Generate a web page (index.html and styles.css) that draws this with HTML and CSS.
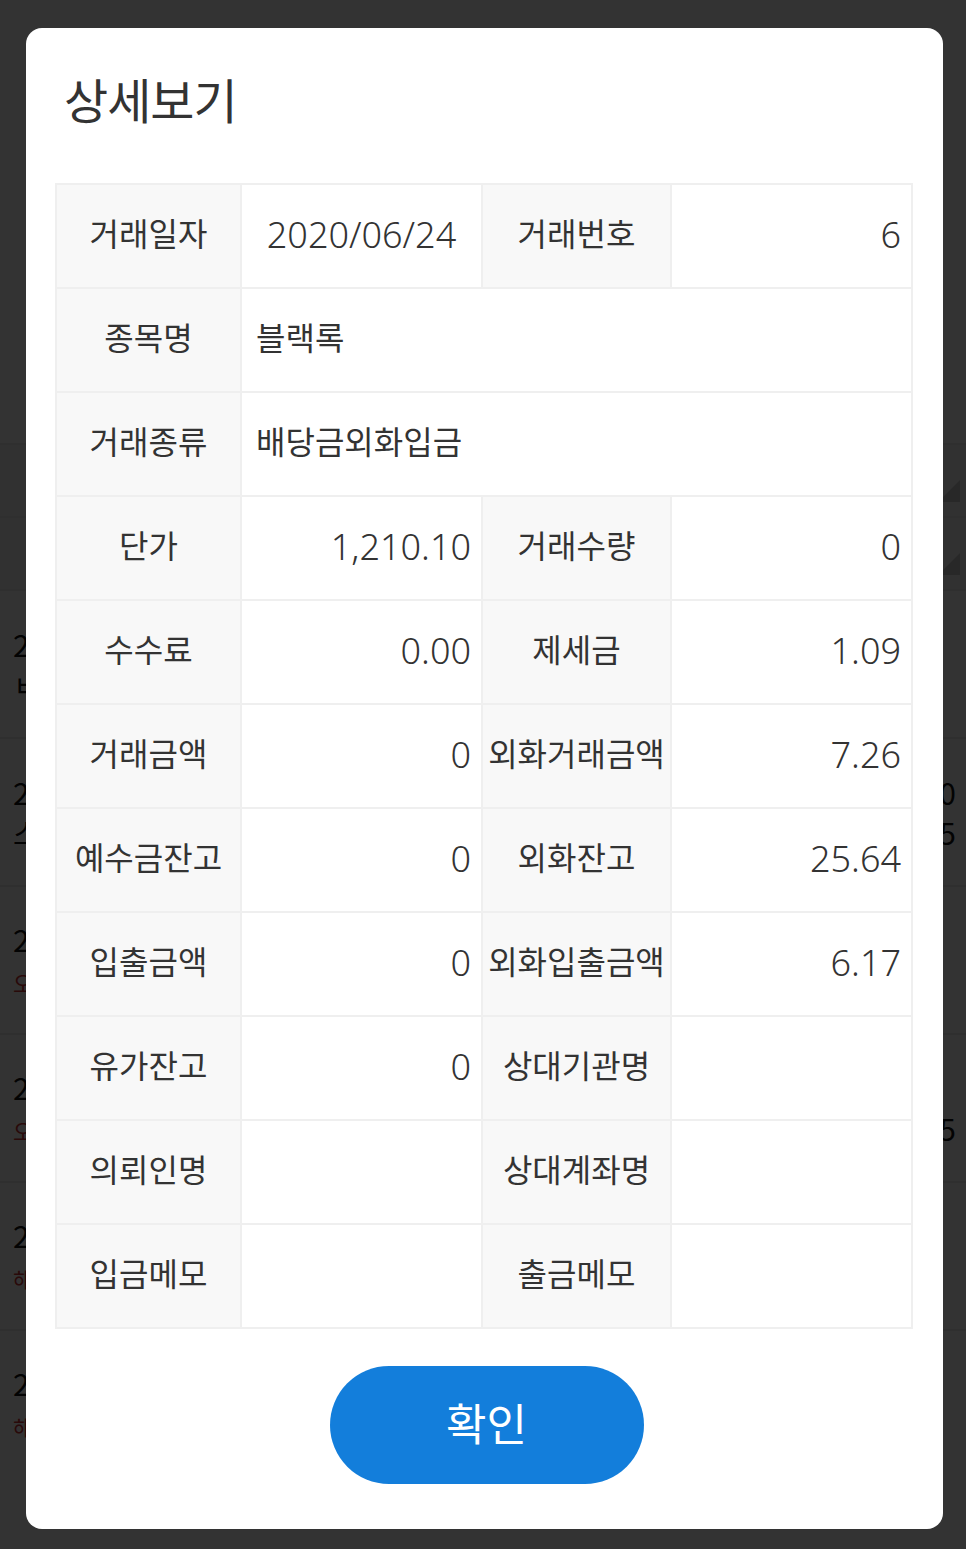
FILE: index.html
```html
<!DOCTYPE html>
<html lang="ko">

<head>
    <meta charset="UTF-8">
    <title>상세보기</title>

    <link rel="stylesheet" href="styles.css">
</head>

<body>
    <div class="behind">
        <div class="behind-sort"><span class="tri"></span></div>
        <div class="behind-sort"><span class="tri"></span></div>
        <div class="behind-row"><span class="l">2<br>ㅂ</span></div>
        <div class="behind-row"><span class="l">2<br>스</span><span class="r">0<br>5</span></div>
        <div class="behind-row"><span class="l">2<br><em>오</em></span></div>
        <div class="behind-row"><span class="l">2<br><em>오</em></span><span class="r">&nbsp;<br>5</span></div>
        <div class="behind-row"><span class="l">2<br><em>해</em></span></div>
        <div class="behind-row"><span class="l">2<br><em>해</em></span></div>
    </div>

    <div class="dim"></div>

    <div class="modal">
        <h2 class="modal-title">상세보기</h2>

        <table class="detail">
            <colgroup>
                <col class="c-label">
                <col class="c-value">
                <col class="c-label2">
                <col class="c-value2">
            </colgroup>
            <tr>
                <th>거래일자</th>
                <td class="center">2020/06/24</td>
                <th>거래번호</th>
                <td class="num">6</td>
            </tr>
            <tr>
                <th>종목명</th>
                <td class="text" colspan="3">블랙록</td>
            </tr>
            <tr>
                <th>거래종류</th>
                <td class="text" colspan="3">배당금외화입금</td>
            </tr>
            <tr>
                <th>단가</th>
                <td class="num">1,210.10</td>
                <th>거래수량</th>
                <td class="num">0</td>
            </tr>
            <tr>
                <th>수수료</th>
                <td class="num">0.00</td>
                <th>제세금</th>
                <td class="num">1.09</td>
            </tr>
            <tr>
                <th>거래금액</th>
                <td class="num">0</td>
                <th>외화거래금액</th>
                <td class="num">7.26</td>
            </tr>
            <tr>
                <th>예수금잔고</th>
                <td class="num">0</td>
                <th>외화잔고</th>
                <td class="num">25.64</td>
            </tr>
            <tr>
                <th>입출금액</th>
                <td class="num">0</td>
                <th>외화입출금액</th>
                <td class="num">6.17</td>
            </tr>
            <tr>
                <th>유가잔고</th>
                <td class="num">0</td>
                <th>상대기관명</th>
                <td class="num"></td>
            </tr>
            <tr>
                <th>의뢰인명</th>
                <td class="num"></td>
                <th>상대계좌명</th>
                <td class="num"></td>
            </tr>
            <tr>
                <th>입금메모</th>
                <td class="num"></td>
                <th>출금메모</th>
                <td class="num"></td>
            </tr>
        </table>

        <div class="actions">
            <button class="btn-ok" type="button">확인</button>
        </div>
    </div>
</body>

</html>
```

FILE: styles.css
```css
* {
    font-family: "Noto Sans CJK KR", "Noto Sans", sans-serif;
    box-sizing: border-box;
}

html,
body {
    height: 100%;
    padding: 0;
    margin: 0;
}

body {
    background-color: #fff;
    color: #333;
    overflow: hidden;
}

/* page under the dialog */
.behind {
    display: flex;
    flex-direction: column;
    padding-top: 443px;
}

.behind-sort {
    height: 73px;
    border-top: 2px solid #e8e8e8;
    background-color: #f4f4f4;
    position: relative;
}

.behind-sort .tri {
    position: absolute;
    right: 6px;
    bottom: 14px;
    width: 0;
    height: 0;
    border-left: 22px solid transparent;
    border-bottom: 22px solid #c8c8c8;
}

.behind-row {
    height: 148px;
    border-top: 2px solid #e8e8e8;
    display: flex;
    justify-content: space-between;
    align-items: center;
    font-size: 30px;
    line-height: 40px;
    color: #111;
}

.behind-row .l {
    padding-left: 13px;
}

.behind-row .r {
    padding-right: 10px;
}

.behind-row em {
    font-style: normal;
    color: #c33;
    font-size: 22px;
}

.dim {
    position: fixed;
    inset: 0;
    background-color: rgba(0, 0, 0, 0.8);
}

/* dialog */
.modal {
    position: fixed;
    top: 28px;
    left: 26px;
    width: 917px;
    height: 1501px;
    background-color: #fff;
    border-radius: 16px;
    padding: 0 32px 0 29px;
    display: flex;
    flex-direction: column;
}

.modal-title {
    margin: 0;
    padding: 38px 0 0 9px;
    height: 155px;
    font-size: 48px;
    line-height: 64px;
    font-weight: 400;
    color: #333;
    letter-spacing: -1px;
}

.detail {
    width: 856px;
    border-collapse: collapse;
    border: 2px solid #e6e6e6;
    table-layout: fixed;
}

.c-label {
    width: 185px;
}

.c-value {
    width: 241px;
}

.c-label2 {
    width: 189px;
}

.c-value2 {
    width: 241px;
}

.detail th,
.detail td {
    height: 104px;
    border: 2px solid #efefef;
    font-size: 32px;
    font-weight: 400;
    color: #333;
    padding: 0 10px 8px;
    white-space: nowrap;
}

.detail th {
    background-color: #f8f8f8;
    text-align: center;
    padding: 0 0 8px;
}

.detail td {
    background-color: #fff;
}

.detail td.num,
.detail td.center {
    font-family: "Noto Sans", "Noto Sans CJK KR", sans-serif;
    font-size: 36px;
    font-weight: 300;
    padding-bottom: 4px;
}

.detail td.num {
    text-align: right;
}

.detail td.center {
    text-align: center;
}

.detail td.text {
    text-align: left;
    padding-left: 14px;
}

.actions {
    display: flex;
    justify-content: center;
    padding: 37px 0 0 7px;
}

.btn-ok {
    width: 314px;
    height: 118px;
    border: none;
    border-radius: 59px;
    background-color: #137edb;
    color: #fff;
    font-size: 44px;
    padding-bottom: 8px;
    cursor: pointer;
}
```
